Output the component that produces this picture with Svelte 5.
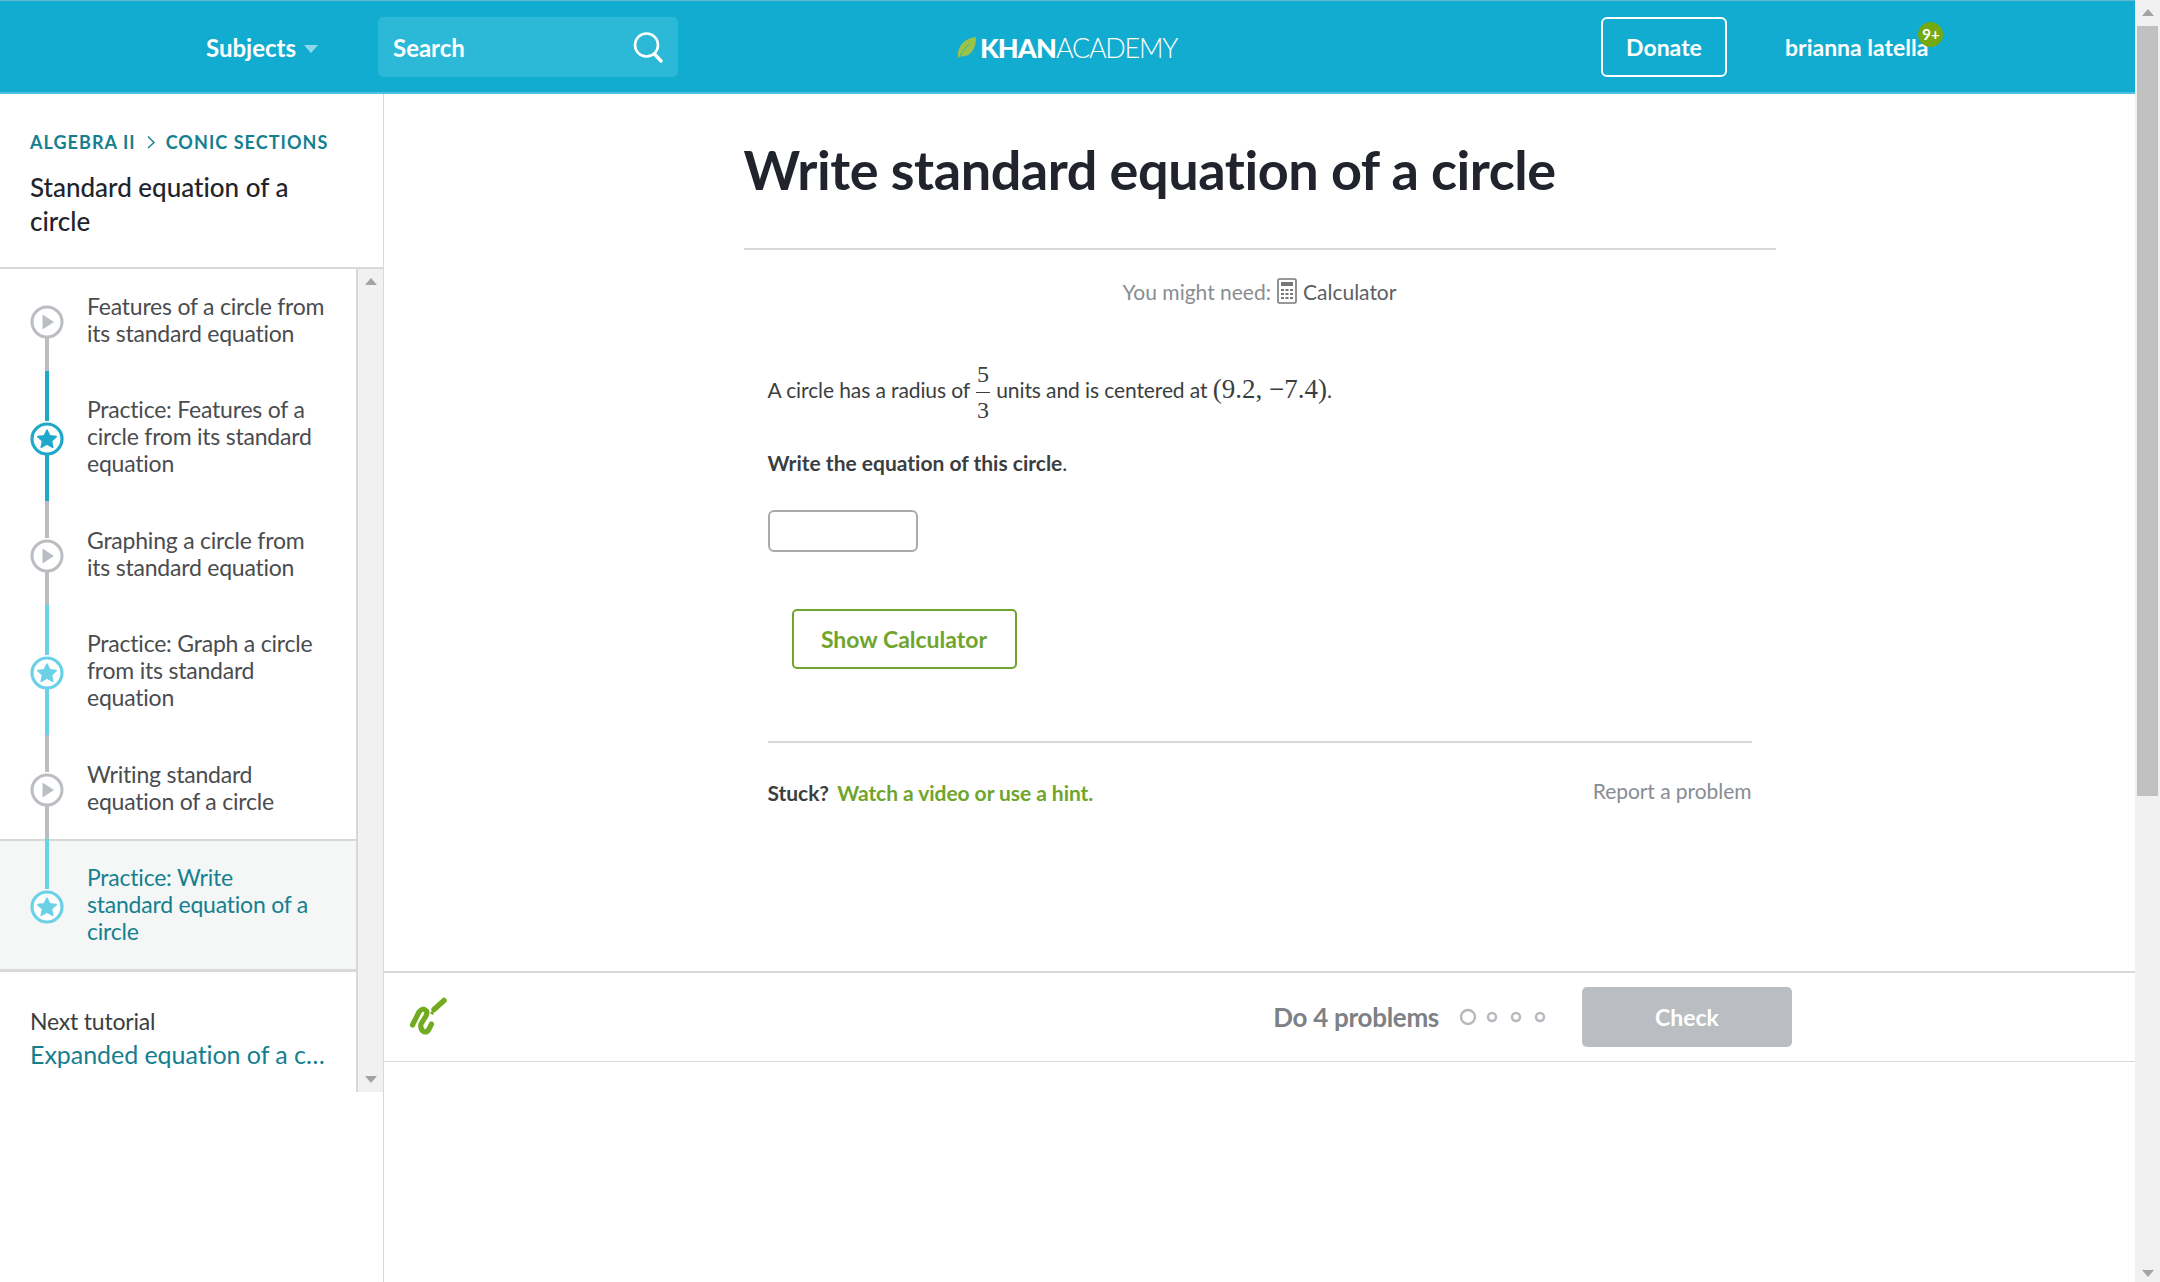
<script lang="ts">
type Item = { title: string; kind: 'video' | 'practice'; top: string; bottom: string; tone?: string; current?: boolean; beforeCurrent?: boolean }

const items: Item[] = [
  { title: 'Features of a circle from its standard equation', kind: 'video', top: 'none', bottom: 'gray' },
  { title: 'Practice: Features of a circle from its standard equation', kind: 'practice', top: 'blue', bottom: 'blue', tone: 'strong' },
  { title: 'Graphing a circle from its standard equation', kind: 'video', top: 'gray', bottom: 'gray' },
  { title: 'Practice: Graph a circle from its standard equation', kind: 'practice', top: 'light', bottom: 'light', tone: 'soft' },
  { title: 'Writing standard equation of a circle', kind: 'video', top: 'gray', bottom: 'gray', beforeCurrent: true },
  { title: 'Practice: Write standard equation of a circle', kind: 'practice', top: 'light', bottom: 'none', tone: 'soft', current: true },
]

const dots = [8, 5, 5, 5]
</script>

<div class="page">
  <div class="window">
    <header class="topbar">
      <button class="subjects" type="button">Subjects <span class="caret"></span></button>
      <div class="search">
        <span>Search</span>
        <svg width="32" height="32" viewBox="0 0 32 32" fill="none" stroke="#fff" stroke-width="2.6" stroke-linecap="round">
          <circle cx="14.5" cy="14" r="11.5" />
          <path d="M22.5 23 L29 30" stroke-width="3.4" />
        </svg>
      </div>
      <div class="logo">
        <svg width="20" height="23" viewBox="0 0 22 26">
          <path d="M1 25 C-1 14 6 3 21 1 C22 12 16 23 6 23 C4 23 2 24 1 25 Z" fill="#9cc24a" />
          <path d="M3 23 C6 17 9 13 14 9" fill="none" stroke="#12acd0" stroke-width="0.8" />
        </svg>
        <span class="khan">KHAN</span><span class="academy">ACADEMY</span>
      </div>
      <button class="donate" type="button">Donate</button>
      <div class="user">
        brianna latella
        <span class="badge">9+</span>
      </div>
    </header>

    <div class="body">
      <aside class="sidebar">
        <div class="side-head">
          <div class="crumbs">
            <span>ALGEBRA II</span>
            <svg width="10" height="14" viewBox="0 0 10 14" fill="none" stroke="#14808f" stroke-width="1.4"><path d="M2 1.5 L8 7.5 L2 13" /></svg>
            <span>CONIC SECTIONS</span>
          </div>
          <h2>Standard equation of a circle</h2>
        </div>
        <div class="side-scroll">
          <div class="side-list">
            {#each items as item}
              <a class="item" class:current={item.current} class:before-current={item.beforeCurrent} href="#top">
                {#if item.top !== 'none'}<span class="line line-top {item.top}"></span>{/if}
                {#if item.bottom !== 'none'}<span class="line line-bottom {item.bottom}"></span>{/if}
                {#if item.kind === 'video'}
                  <svg class="node" width="34" height="34" viewBox="0 0 34 34">
                    <circle cx="17" cy="17" r="15" fill="#fff" stroke="#babec2" stroke-width="3" />
                    <path d="M12.5 9.5 L24 17 L12.5 24.5 Z" fill="#babec2" />
                  </svg>
                {:else}
                  <svg class="node {item.tone}" width="34" height="34" viewBox="0 0 34 34">
                    <circle class="ring" cx="17" cy="17" r="15" fill="#fff" stroke-width="3.2" />
                    <path class="star" d="M17 8 L19.8 13.8 L26.2 14.6 L21.5 19 L22.8 25.4 L17 22.2 L11.2 25.4 L12.5 19 L7.8 14.6 L14.2 13.8 Z" stroke-linejoin="round" stroke-width="1.5" />
                  </svg>
                {/if}
                <span class="item-title">{item.title}</span>
              </a>
            {/each}
            <div class="next">
              <div class="next-label">Next tutorial</div>
              <div class="next-link">Expanded equation of a c…</div>
            </div>
          </div>
          <div class="side-track">
            <span class="arrow up"></span>
            <span class="arrow down"></span>
          </div>
        </div>
      </aside>

      <main class="main">
        <section class="exercise">
          <div class="column">
            <h1>Write standard equation of a circle</h1>
            <div class="need">
              You might need:
              <svg width="20" height="26" viewBox="0 0 20 26">
                <rect x="1" y="1" width="18" height="24" rx="1.5" fill="#fff" stroke="#777" stroke-width="1.6" />
                <rect x="4" y="4" width="12" height="4" fill="#777" />
                <path d="M4 11h3v2H4zM8.500 11h3v2h-3zM13 11h3v2h-3zM4 15h3v2H4zM8.500 15h3v2h-3zM13 15h3v2h-3zM4 19h3v2H4zM8.500 19h3v2h-3zM13 19h3v2h-3z" fill="#777" />
              </svg>
              <span class="calc">Calculator</span>
            </div>

            <div class="problem">
              <p class="statement">
                A circle has a radius of
                <span class="frac"><span>5</span><span class="den">3</span></span>
                units and is centered at <span class="math">(9.2, −7.4)</span>.
              </p>
              <p class="ask"><strong>Write the equation of this circle</strong>.</p>
              <input class="answer" type="text" aria-label="Answer" />
              <button class="show-calc" type="button">Show Calculator</button>
            </div>

            <div class="help">
              <div><strong class="stuck">Stuck?</strong> <a class="hint" href="#top">Watch a video or use a hint.</a></div>
              <a class="report" href="#top">Report a problem</a>
            </div>
          </div>
        </section>

        <footer class="task-bar">
          <svg class="squiggle" width="44" height="44" viewBox="0 0 44 44" fill="none" stroke="#72ab1f" stroke-linecap="round" stroke-linejoin="round">
            <path d="M4.500 30 L11 17 Q14.500 12 18.500 16 Q20 19 16 24 L13 29 Q12 34 15.500 36.500 Q19 38 21 34 L23.500 29" stroke-width="5.200" />
            <path d="M26 14.500 L36 5.500" stroke-width="5.500" />
            <path d="M23 18 L24.500 16.500 L25 19 Z" fill="#72ab1f" stroke-width="1.500" />
          </svg>
          <span class="todo">Do 4 problems</span>
          <div class="dots">
            {#each dots as r}
              <svg width="18" height="18" viewBox="0 0 18 18"><circle cx="9" cy="9" r={r - 1} fill="#fff" stroke="#b5b9bd" stroke-width="2.400" /></svg>
            {/each}
          </div>
          <button class="check" type="button">Check</button>
        </footer>
      </main>
    </div>
  </div>

  <div class="page-track">
    <span class="arrow up"></span>
    <span class="page-thumb"></span>
    <span class="arrow down"></span>
  </div>
</div>

<style>
  :global(body) {
    margin: 0;
    background: #fff;
    overflow: hidden;
  }

  .page {
    display: flex;
    height: 1282px;
    font-family: Lato, "Open Sans", sans-serif;
    font-variant-ligatures: none;
    color: #3b3e40;
  }

  .window {
    flex: 1;
    min-width: 0;
    display: flex;
    flex-direction: column;
  }

  /* top bar */
  .topbar {
    height: 94px;
    box-sizing: border-box;
    display: flex;
    align-items: center;
    padding-left: 206px;
    padding-top: 1px;
    background: #12acd0;
    border-top: 1px solid #62b8d4;
    border-bottom: 2px solid #4fc0dd;
    color: #fff;
    font-weight: 700;
    font-size: 23px;
  }

  .subjects {
    display: flex;
    align-items: center;
    gap: 8px;
    padding: 0;
    width: 172px;
    border: none;
    background: none;
    color: inherit;
    font: inherit;
    font-size: 24px;
  }

  .caret {
    width: 0;
    height: 0;
    margin-top: 4px;
    border-left: 7px solid transparent;
    border-right: 7px solid transparent;
    border-top: 8px solid #8fd9ea;
  }

  .search {
    width: 300px;
    height: 60px;
    box-sizing: border-box;
    padding: 0 14px 0 15px;
    display: flex;
    align-items: center;
    justify-content: space-between;
    background: #2bb9d7;
    border-radius: 5px;
    font-size: 24px;
  }

  .logo {
    margin-left: 279px;
    width: 222px;
    flex-shrink: 0;
    display: flex;
    align-items: center;
    font-size: 27px;
    line-height: 1;
  }

  .logo svg {
    flex-shrink: 0;
    margin-right: 3px;
  }

  .khan {
    font-weight: 900;
    letter-spacing: -0.9px;
  }

  .academy {
    font-weight: 300;
    letter-spacing: -1.27px;
  }

  .donate {
    margin-left: 422px;
    width: 126px;
    height: 60px;
    border: 2px solid #fff;
    border-radius: 6px;
    background: none;
    color: #fff;
    font: inherit;
  }

  .user {
    position: relative;
    margin-left: 58px;
    white-space: nowrap;
  }

  .badge {
    position: absolute;
    top: -11px;
    right: -15px;
    width: 25px;
    height: 25px;
    border-radius: 50%;
    background: #74a90f;
    font-size: 15px;
    line-height: 25px;
    text-align: center;
  }

  .body {
    flex: 1;
    display: flex;
    min-height: 0;
  }

  /* sidebar */
  .sidebar {
    width: 384px;
    box-sizing: border-box;
    flex-shrink: 0;
    border-right: 1px solid #d8d8d8;
  }

  .side-head {
    height: 175px;
    box-sizing: border-box;
    padding: 37px 30px 0;
    border-bottom: 2px solid #d8d8d8;
  }

  .crumbs {
    display: flex;
    align-items: center;
    gap: 10px;
    font-size: 18px;
    line-height: 22px;
    font-weight: 700;
    letter-spacing: 1.05px;
    color: #14808f;
  }

  .side-head h2 {
    margin: 17px 0 0;
    font-size: 26px;
    line-height: 34px;
    font-weight: 500;
    color: #21242c;
  }

  .side-scroll {
    display: flex;
    height: 823px;
  }

  .side-list {
    width: 356px;
    flex-shrink: 0;
  }

  .side-track {
    flex: 1;
    display: flex;
    flex-direction: column;
    justify-content: space-between;
    align-items: center;
    padding: 9px 0;
    box-sizing: border-box;
    background: #f1f1f1;
    border-left: 2px solid #d8d8d8;
  }

  .arrow {
    width: 0;
    height: 0;
    border-left: 6px solid transparent;
    border-right: 6px solid transparent;
  }

  .arrow.up {
    border-bottom: 7px solid #a3a3a3;
  }

  .arrow.down {
    border-top: 7px solid #a3a3a3;
  }

  .item {
    position: relative;
    display: flex;
    align-items: center;
    gap: 23px;
    padding: 23.5px 26px 24px 30px;
    border-bottom: 2px solid transparent;
    text-decoration: none;
    color: #4a4c4f;
    font-size: 23px;
    line-height: 27px;
    letter-spacing: -0.22px;
  }

  .item.before-current {
    border-bottom-color: #d8d8d8;
  }

  .item.current {
    padding-right: 40px;
    background: #f5f7f7;
    border-bottom: 3px solid #d8d8d8;
    color: #14808f;
  }

  .line {
    position: absolute;
    left: 45px;
    width: 4px;
  }

  .line-top {
    top: -2px;
    height: calc(50% - 14px);
  }

  .line-bottom {
    top: calc(50% + 15px);
    bottom: 0;
  }

  .line.gray {
    background: #babec2;
  }

  .line.blue {
    background: #1fa8c9;
  }

  .line.light {
    background: #6bd1e6;
  }

  .node {
    position: relative;
    flex-shrink: 0;
    margin-top: 5px;
  }

  .node .ring {
    stroke: #6bd1e6;
  }

  .node .star {
    fill: #6bd1e6;
    stroke: #6bd1e6;
  }

  .node.strong .ring {
    stroke: #1fa8c9;
  }

  .node.strong .star {
    fill: #1fa8c9;
    stroke: #1fa8c9;
  }

  .item-title {
    position: relative;
  }

  .next {
    padding: 35px 19px 0 30px;
    white-space: nowrap;
  }

  .next-label {
    font-size: 23px;
    line-height: 28px;
    letter-spacing: -0.2px;
    color: #3b3e40;
  }

  .next-link {
    margin-top: 3px;
    font-size: 25px;
    line-height: 33px;
    letter-spacing: -0.05px;
    color: #14808f;
  }

  /* main */
  .main {
    flex: 1;
    min-width: 0;
    display: flex;
    flex-direction: column;
  }

  .exercise {
    height: 877px;
    box-sizing: border-box;
    flex-shrink: 0;
  }

  .column {
    width: 1032px;
    margin: 0 auto;
  }

  h1 {
    margin: 0;
    padding-top: 45px;
    height: 156px;
    box-sizing: border-box;
    border-bottom: 2px solid #d8d8d8;
    font-size: 54px;
    line-height: 62px;
    font-weight: 700;
    letter-spacing: -0.45px;
    color: #21242c;
    white-space: nowrap;
  }

  .need {
    margin-top: 27px;
    display: flex;
    justify-content: center;
    align-items: center;
    gap: 6px;
    height: 28px;
    font-size: 21px;
    color: #8a8d90;
  }

  .calc {
    color: #5c5f62;
  }

  .problem {
    padding: 0 24px;
  }

  .statement {
    margin: 52px 0 0;
    height: 60px;
    line-height: 60px;
    font-size: 21px;
    letter-spacing: -0.1px;
    white-space: nowrap;
  }

  .frac {
    display: inline-flex;
    flex-direction: column;
    align-items: center;
    vertical-align: middle;
    width: 14px;
    margin: 0 1px;
    font-family: "Liberation Serif", serif;
    font-size: 24px;
    line-height: 35px;
  }

  .den {
    width: 100%;
    text-align: center;
    border-top: 1px solid #3b3e40;
  }

  .math {
    font-family: "Liberation Serif", serif;
    font-size: 27px;
    letter-spacing: 0;
  }

  .ask {
    margin: 31px 0 0;
    font-size: 21px;
    line-height: 30px;
  }

  .answer {
    display: block;
    margin-top: 32px;
    width: 150px;
    height: 42px;
    box-sizing: border-box;
    border: 2px solid #a8abad;
    border-radius: 6px;
    background: #fff;
  }

  .show-calc {
    display: block;
    margin: 57px 0 0 24px;
    width: 225px;
    height: 60px;
    border: 2px solid #6fa52c;
    border-radius: 5px;
    background: #fff;
    color: #6fa52c;
    font-family: inherit;
    font-size: 23px;
    font-weight: 700;
  }

  .help {
    margin: 72px 24px 0;
    padding-top: 35px;
    border-top: 2px solid #d8d8d8;
    display: flex;
    justify-content: space-between;
    align-items: center;
    font-size: 21px;
    letter-spacing: -0.05px;
  }

  .stuck {
    margin-right: 3px;
  }

  .hint {
    color: #6fa52c;
    font-weight: 700;
    text-decoration: none;
  }

  .report {
    padding-bottom: 4px;
    color: #888d93;
    text-decoration: none;
  }

  .task-bar {
    height: 91px;
    box-sizing: border-box;
    display: flex;
    align-items: center;
    padding-left: 24px;
    border-top: 2px solid #d8d8d8;
    border-bottom: 1px solid #d8d8d8;
  }

  .squiggle {
    margin-right: auto;
  }

  .todo {
    font-size: 26px;
    font-weight: 700;
    letter-spacing: -0.3px;
    color: #7d8186;
  }

  .dots {
    display: flex;
    align-items: center;
    gap: 6px;
    margin-left: 20px;
  }

  .check {
    margin: 0 343px 0 33px;
    width: 210px;
    height: 60px;
    border: none;
    border-radius: 5px;
    background: #babec2;
    color: #fff;
    font-family: inherit;
    font-size: 23px;
    font-weight: 700;
  }

  /* page scrollbar */
  .page-track {
    width: 25px;
    flex-shrink: 0;
    box-sizing: border-box;
    padding: 9px 2px 5px;
    display: flex;
    flex-direction: column;
    align-items: center;
    background: #f1f1f1;
  }

  .page-thumb {
    width: 100%;
    height: 770px;
    margin: 10px 0 auto;
    background: #c1c1c1;
  }
</style>
